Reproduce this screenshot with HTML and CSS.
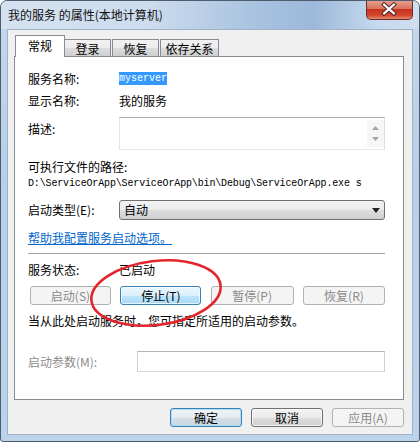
FILE: index.html
```html
<!DOCTYPE html>
<html>
<head>
<meta charset="utf-8">
<link rel="stylesheet" href="styles.css">
</head>
<body>
<div class="window">
  <div class="titlebar">
    <span class="title">我的服务 的属性(本地计算机)</span>
    <div class="close">
      <svg width="47" height="20" viewBox="0 0 47 20">
        <path d="M18.5 5.5 L28.5 14.5 M28.5 5.5 L18.5 14.5" stroke="#4a2020" stroke-width="4.2" stroke-linecap="square"/>
        <path d="M18.5 5.5 L28.5 14.5 M28.5 5.5 L18.5 14.5" stroke="#ffffff" stroke-width="2.2" stroke-linecap="square"/>
      </svg>
    </div>
  </div>
  <div class="client">
    <div class="tabs">
      <div class="tab active">常规</div>
      <div class="tab w2">登录</div>
      <div class="tab w3">恢复</div>
      <div class="tab w4">依存关系</div>
    </div>
    <div class="panel">
      <div class="row r1"><span class="label">服务名称:</span><span class="sel">myserver</span></div>
      <div class="row r2"><span class="label">显示名称:</span><span>我的服务</span></div>
      <div class="row r3">
        <span class="label top">描述:</span>
        <div class="desc">
          <div class="vscroll">
            <svg width="7" height="4" viewBox="0 0 7 4"><path d="M0 4 L3.5 0 L7 4 Z" fill="#a5a5a5"/></svg>
            <svg width="7" height="4" viewBox="0 0 7 4"><path d="M0 0 L3.5 4 L7 0 Z" fill="#a5a5a5"/></svg>
          </div>
        </div>
      </div>
      <div class="row r4">可执行文件的路径:</div>
      <div class="row path">D:\ServiceOrApp\ServiceOrApp\bin\Debug\ServiceOrApp.exe s</div>
      <div class="row r6">
        <span class="label">启动类型(E):</span>
        <div class="combo">
          <span>自动</span>
          <svg width="8" height="5" viewBox="0 0 8 5"><path d="M0 0 L8 0 L4 5 Z" fill="#222"/></svg>
        </div>
      </div>
      <div class="row link"><span class="lnk">帮助我配置服务启动选项。</span></div>
      <div class="sep"></div>
      <div class="row r8"><span class="label">服务状态:</span><span>已启动</span></div>
      <div class="btnrow">
        <div class="btn dis b1">启动(S)</div>
        <div class="btn focus b2">停止(T)</div>
        <div class="btn dis b3">暂停(P)</div>
        <div class="btn dis b4">恢复(R)</div>
      </div>
      <div class="row hint">当从此处启动服务时，您可指定所适用的启动参数。</div>
      <div class="row param">
        <span class="plabel">启动参数(M):</span>
        <div class="pbox"></div>
      </div>
    </div>
    <div class="footer">
      <div class="btn def fbtn">确定</div>
      <div class="btn fbtn">取消</div>
      <div class="btn dis fbtn">应用(A)</div>
    </div>
  </div>
  <svg class="circle" width="150" height="84" viewBox="0 0 150 84">
    <ellipse cx="71" cy="39" rx="65" ry="32" transform="rotate(-7 71 39)" fill="none" stroke="#e3262e" stroke-width="2.6"/>
  </svg>
</div>
</body>
</html>
```

FILE: styles.css
```css
* { box-sizing: border-box; }
html, body { margin: 0; padding: 0; }
body {
  width: 420px;
  height: 442px;
  overflow: hidden;
  background: #ffffff;
  font-family: "Noto Sans CJK SC", "Noto Sans", sans-serif;
  font-size: 12px;
  color: #000;
}
.window {
  position: relative;
  width: 420px;
  height: 442px;
  border: 1px solid #4e5d6e;
  border-radius: 7px 7px 3px 3px;
  background: linear-gradient(to bottom, #c4d8ee 0%, #b7cfe9 40%, #bcd3ec 100%);
  display: flex;
  flex-direction: column;
  overflow: hidden;
}
.titlebar {
  height: 28px;
  display: flex;
  align-items: flex-start;
  padding-left: 7px;
  background: linear-gradient(to right, #d4e2f0 0%, #cddcee 35%, #a9c3e0 60%, #9db9da 75%, #c6d9ee 90%, #cfdfef 100%);
}
.title {
  margin-top: 6px;
  line-height: 16px;
  color: #111;
  font-size: 12px;
}
.close {
  margin-left: auto;
  margin-right: 6px;
  margin-top: -1px;
  width: 47px;
  height: 20px;
  border: 1px solid #6b2b2b;
  border-top: none;
  border-radius: 0 0 5px 5px;
  background: linear-gradient(to bottom, #e8a493 0%, #d8735f 45%, #c8321c 50%, #d2462e 80%, #e88a6a 100%);
  display: flex;
  align-items: center;
  justify-content: center;
}
.close svg { display: block; margin-left: -1px; margin-top: -1px; }
.client {
  margin: 0 6px 6px 6px;
  height: 406px;
  border: 1px solid #9fb3c8;
  background: #f0f0f0;
  padding-top: 5px;
  display: flex;
  flex-direction: column;
}
.tabs {
  display: flex;
  align-items: flex-end;
  height: 21px;
  margin-left: 7px;
  position: relative;
  z-index: 2;
}
.tab {
  height: 17px;
  border: 1px solid #898c95;
  border-bottom: none;
  border-left: none;
  background: linear-gradient(to bottom, #f2f2f2 0%, #ebebeb 50%, #dcdcdc 51%, #cfcfcf 100%);
  display: flex;
  align-items: center;
  justify-content: center;
  line-height: 16px;
  padding-top: 1px;
}
.tab.active {
  height: 22px;
  width: 50px;
  margin-bottom: -1px;
  border-left: 1px solid #898c95;
  background: #ffffff;
  padding-top: 0;
  align-items: flex-start;
  padding-top: 2px;
}
.w2 { width: 46px; }
.w3 { width: 47px; margin-left: 1px; border-left: 1px solid #898c95; }
.w4 { width: 59px; margin-left: 1px; border-left: 1px solid #898c95; }
.panel {
  margin-left: 6px;
  width: 390px;
  height: 344px;
  border: 1px solid #898c95;
  background: #ffffff;
  padding: 0 18px 0 13px;
  display: flex;
  flex-direction: column;
}
.row {
  display: flex;
  align-items: center;
  height: 16px;
  line-height: 16px;
  white-space: nowrap;
}
.label { width: 91px; flex: none; }
.label.top { align-self: flex-start; margin-top: 4px; }
.r1 { margin-top: 14px; }
.r2 { margin-top: 6px; }
.r3 { margin-top: 8px; height: 33px; align-items: flex-start; }
.r4 { margin-top: 9px; }
.path {
  margin-top: 1px;
  font-family: "Liberation Mono", "DejaVu Sans Mono", monospace;
  font-size: 10px;
  letter-spacing: -0.15px;
}
.r6 { margin-top: 8px; height: 20px; }
.link { margin-top: 10px; }
.lnk { color: #0066cc; text-decoration: underline; }
.sep {
  margin-top: 7px;
  height: 2px;
  border-top: 1px solid #a0a0a0;
  border-bottom: 1px solid #ffffff;
}
.r8 { margin-top: 7px; }
.sel {
  background: #3399ff;
  color: #ffffff;
  font-family: "Liberation Mono", "DejaVu Sans Mono", monospace;
  font-size: 10px;
  line-height: 13px;
  height: 13px;
  padding: 0;
  margin-top: -1px;
}
.desc {
  flex: 1;
  height: 33px;
  border: 1px solid;
  border-color: #abadb3 #dbdfe6 #e3e9ef #e2e3ea;
  background: #ffffff;
  display: flex;
  justify-content: flex-end;
  padding: 2px 0 2px 0;
}
.vscroll {
  width: 17px;
  background: #f6f6f6;
  display: flex;
  flex-direction: column;
  align-items: center;
  justify-content: space-around;
  padding: 3px 0;
}
.vscroll svg { display: block; }
.combo {
  flex: 1;
  height: 20px;
  border: 1px solid #707070;
  border-radius: 3px;
  background: linear-gradient(to bottom, #f2f2f2 0%, #ebebeb 50%, #dddddd 51%, #cfcfcf 100%);
  display: flex;
  align-items: center;
  justify-content: space-between;
  padding: 0 4px 0 4px;
}
.combo svg { display: block; margin-right: 0; }
.btnrow {
  margin-top: 8px;
  height: 19px;
  padding-left: 2px;
  display: flex;
  justify-content: space-between;
}
.btn {
  height: 19px;
  border: 1px solid #707070;
  border-radius: 3px;
  background: linear-gradient(to bottom, #f2f2f2 0%, #ebebeb 50%, #dddddd 51%, #cfcfcf 100%);
  box-shadow: inset 0 0 0 1px rgba(255,255,255,0.7);
  display: flex;
  align-items: center;
  justify-content: center;
  line-height: 16px;
  white-space: nowrap;
}
.btn.dis {
  border-color: #adb2b5;
  background: #f4f4f4;
  color: #8a8a8a;
  box-shadow: none;
}
.btn.focus {
  border-color: #3c7fb1;
  background: linear-gradient(to bottom, #eaf6fd 0%, #d9f0fc 50%, #bee6fd 51%, #a7d9f5 100%);
}
.btn.def {
  border-color: #3c7fb1;
  box-shadow: inset 0 0 0 1px #a6e0f9;
  background: linear-gradient(to bottom, #eef3f7 0%, #e4ecf2 50%, #d4dfe8 51%, #c8d6e2 100%);
}
.b1 { width: 81px; }
.b2 { width: 81px; }
.b3 { width: 83px; }
.b4 { width: 82px; }
.hint { margin-top: 8px; }
.param { margin-top: 22px; height: 21px; }
.plabel { width: 109px; flex: none; color: #8d8d8d; }
.pbox {
  flex: 1;
  height: 21px;
  border: 1px solid #b8b8b8;
  border-color: #b5b5b5 #cfcfcf #d6d6d6 #cfcfcf;
  background: #ffffff;
}
.footer {
  margin-top: 8px;
  display: flex;
  justify-content: flex-end;
  gap: 9px;
  padding-right: 8px;
}
.fbtn { width: 72px; height: 19px; }
.circle {
  position: absolute;
  left: 84px;
  top: 253px;
  pointer-events: none;
}
```
